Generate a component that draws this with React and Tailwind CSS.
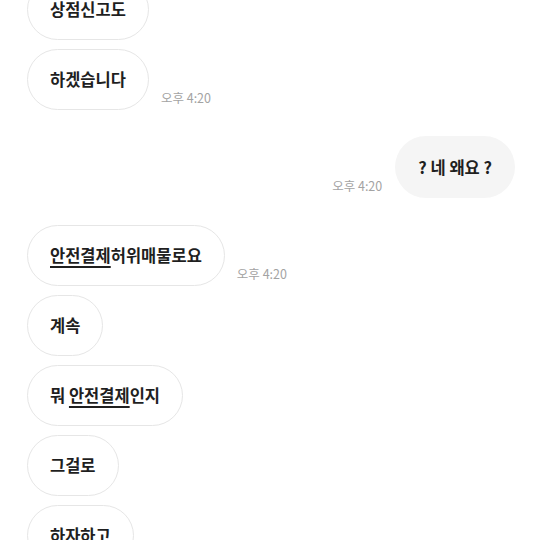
import React from "react";

const font = { fontFamily: '"Noto Sans CJK KR", "Noto Sans", sans-serif' };

function Time() {
  return (
    <span className="mb-[4px] shrink-0 text-[12.5px] leading-[17px] text-[#a3a3a3]">
      오후 4:20
    </span>
  );
}

function Left({ children, time }) {
  return (
    <div className="flex items-end gap-[12px]">
      <div className="flex h-[61px] items-center rounded-full border border-[#e6e6e6] bg-white px-[22px] text-[16.5px] font-bold text-[#1f1f1f]">
        {children}
      </div>
      {time && <Time />}
    </div>
  );
}

function Right({ children, time }) {
  return (
    <div className="flex items-end justify-end gap-[13px]">
      {time && <Time />}
      <div className="flex h-[62px] items-center rounded-full bg-[#f5f5f5] px-[23px] text-[16.5px] font-bold text-[#1f1f1f]">
        {children}
      </div>
    </div>
  );
}

const U = ({ children }) => (
  <span className="underline decoration-[1.5px] underline-offset-[4px]">{children}</span>
);

export default function App() {
  return (
    <div className="h-[540px] w-[540px] overflow-hidden bg-white" style={font}>
      <div className="mt-[-21px] flex flex-col pl-[27px] pr-[25px]">
        <div className="flex flex-col gap-[9px]">
          <Left>상점신고도</Left>
          <Left time>하겠습니다</Left>
        </div>
        <div className="mt-[26px]">
          <Right time>? 네 왜요 ?</Right>
        </div>
        <div className="mt-[27px] flex flex-col gap-[9px]">
          <Left time>
            <span>
              <U>안전결제</U>허위매물로요
            </span>
          </Left>
          <Left>계속</Left>
          <Left>
            <span>
              뭐 <U>안전결제</U>인지
            </span>
          </Left>
          <Left>그걸로</Left>
          <Left>하자하고</Left>
        </div>
      </div>
    </div>
  );
}
